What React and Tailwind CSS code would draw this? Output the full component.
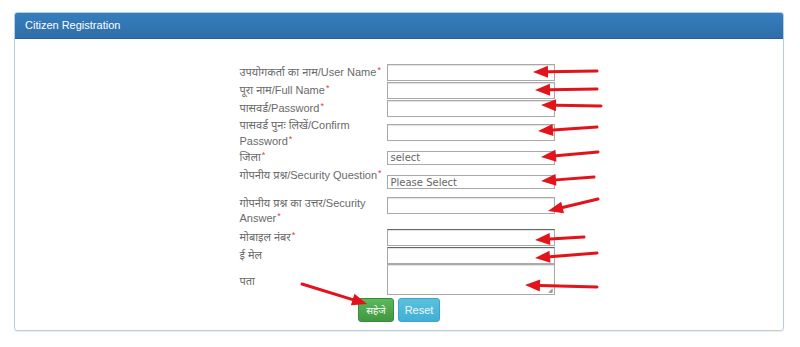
const ARROWS = [
  [597, 71, 533, 72],
  [597, 89, 535, 90],
  [601, 106, 541, 105],
  [597, 127, 538, 131],
  [598, 152, 541, 157],
  [594, 177, 541, 181],
  [598, 199, 548, 211],
  [584, 237, 535, 240],
  [597, 253, 535, 258],
  [597, 287, 525, 285],
  [302, 284, 367, 304],
]

function Arrow({ x1, y1, x2, y2 }) {
  const ang = Math.atan2(y2 - y1, x2 - x1)
  const len = 15
  const half = 6
  const bx = x2 - Math.cos(ang) * len
  const by = y2 - Math.sin(ang) * len
  const px = -Math.sin(ang) * half
  const py = Math.cos(ang) * half
  return (
    <g>
      <line x1={x1} y1={y1} x2={bx} y2={by} stroke="#e3131b" strokeWidth="3" strokeLinecap="round" />
      <polygon points={`${x2},${y2} ${bx + px},${by + py} ${bx - px},${by - py}`} fill="#e3131b" />
    </g>
  )
}

function Star() {
  return <span className="text-[#e0403c] text-[9px] align-top relative -top-[2px] ml-[1px]">*</span>
}

const inputCls = 'w-[168px] border border-[#a9a9a9] bg-white shadow-[inset_0_1px_1px_rgba(0,0,0,0.12)]'
const font = '"Liberation Sans", "Noto Sans", Arial, sans-serif'

export default function App() {
  return (
    <div className="relative w-[800px] h-[347px] bg-white overflow-hidden" style={{ fontFamily: font }}>
      <div className="ml-[14px] mt-[12px] w-[770px] border border-[#b9cde0] rounded-[3px] shadow-[0_1px_1px_rgba(0,0,0,0.08)]">
        {/* Header */}
        <div className="h-[26px] flex items-center px-[10px] bg-gradient-to-b from-[#357ebd] to-[#2f6ea8] border-b border-[#2a5f92] rounded-t-[2px]">
          <span className="text-white text-[11px]">Citizen Registration</span>
        </div>

        {/* Form */}
        <div className="pt-[24px] pb-[8px] flex flex-col items-center text-[11px] text-[#6a6a6a]">
          <div className="w-[319px] pr-[4px] flex flex-col">
            <div className="flex h-[18px] items-center">
              <div className="w-[147px] leading-[18px]">उपयोगकर्ता का नाम/User Name<Star /></div>
              <div className={`${inputCls} h-[17px]`} />
            </div>
            <div className="flex h-[18px] items-center">
              <div className="w-[147px] leading-[18px]">पूरा नाम/Full Name<Star /></div>
              <div className={`${inputCls} h-[17px]`} />
            </div>
            <div className="flex h-[18px] items-center">
              <div className="w-[147px] leading-[18px]">पासवर्ड/Password<Star /></div>
              <div className={`${inputCls} h-[17px]`} />
            </div>
            <div className="flex h-[32px] items-start">
              <div className="w-[147px] leading-[16px]">पासवर्ड पुनः लिखें/Confirm<br />Password<Star /></div>
              <div className={`${inputCls} h-[17px] mt-[7px]`} />
            </div>
            <div className="flex h-[17px] items-center">
              <div className="w-[147px] leading-[17px]">जिला<Star /></div>
              <div className={`${inputCls} h-[14px] flex items-center px-[3px] text-[10px] text-[#666] shadow-none`} style={{ fontFamily: '"DejaVu Sans", sans-serif' }}>select</div>
            </div>
            <div className="flex h-[24px] items-start">
              <div className="w-[147px] leading-[18px]">गोपनीय प्रश्न/Security Question<Star /></div>
              <div className={`${inputCls} h-[14px] mt-[9px] flex items-center px-[3px] text-[10px] text-[#666] shadow-none`} style={{ fontFamily: '"DejaVu Sans", sans-serif' }}>Please Select</div>
            </div>
            <div className="flex h-[38px] items-start pt-[6px]">
              <div className="w-[147px] leading-[15px]">गोपनीय प्रश्न का उत्तर/Security<br />Answer<Star /></div>
              <div className={`${inputCls} h-[17px] mt-[1px]`} />
            </div>
            <div className="flex h-[18px] items-center">
              <div className="w-[147px] leading-[18px]">मोबाइल नंबर<Star /></div>
              <div className={`${inputCls} h-[17px] border-t-[#666]`} />
            </div>
            <div className="flex h-[18px] items-center">
              <div className="w-[147px] leading-[18px]">ई मेल</div>
              <div className={`${inputCls} h-[17px] border-t-[#666]`} />
            </div>
            <div className="flex h-[32px] items-start">
              <div className="w-[147px] leading-[16px] mt-[9px]">पता</div>
              <div className={`${inputCls} h-[31px] relative`}>
                <span className="absolute right-[1px] bottom-[1px] text-[6px] leading-none text-[#999]">◢</span>
              </div>
            </div>
          </div>

          <div className="flex gap-[4px] mt-[2px]">
            <button className="w-[36px] h-[24px] rounded-[3px] bg-gradient-to-b from-[#5cb85c] to-[#3f9a3f] border border-[#3b8a3b] text-white text-[10px]" style={{ fontFamily: font }}>सहेजे</button>
            <button className="w-[42px] h-[24px] rounded-[3px] bg-gradient-to-b from-[#5bc0de] to-[#3fb0d4] border border-[#3aa8c8] text-[#eef8fc] text-[11px]" style={{ fontFamily: font }}>Reset</button>
          </div>
        </div>
      </div>

      {/* Red annotation arrows */}
      <svg className="absolute inset-0 pointer-events-none" width="800" height="347" viewBox="0 0 800 347">
        {ARROWS.map(([x1, y1, x2, y2], i) => (
          <Arrow key={i} x1={x1} y1={y1} x2={x2} y2={y2} />
        ))}
      </svg>
    </div>
  )
}
